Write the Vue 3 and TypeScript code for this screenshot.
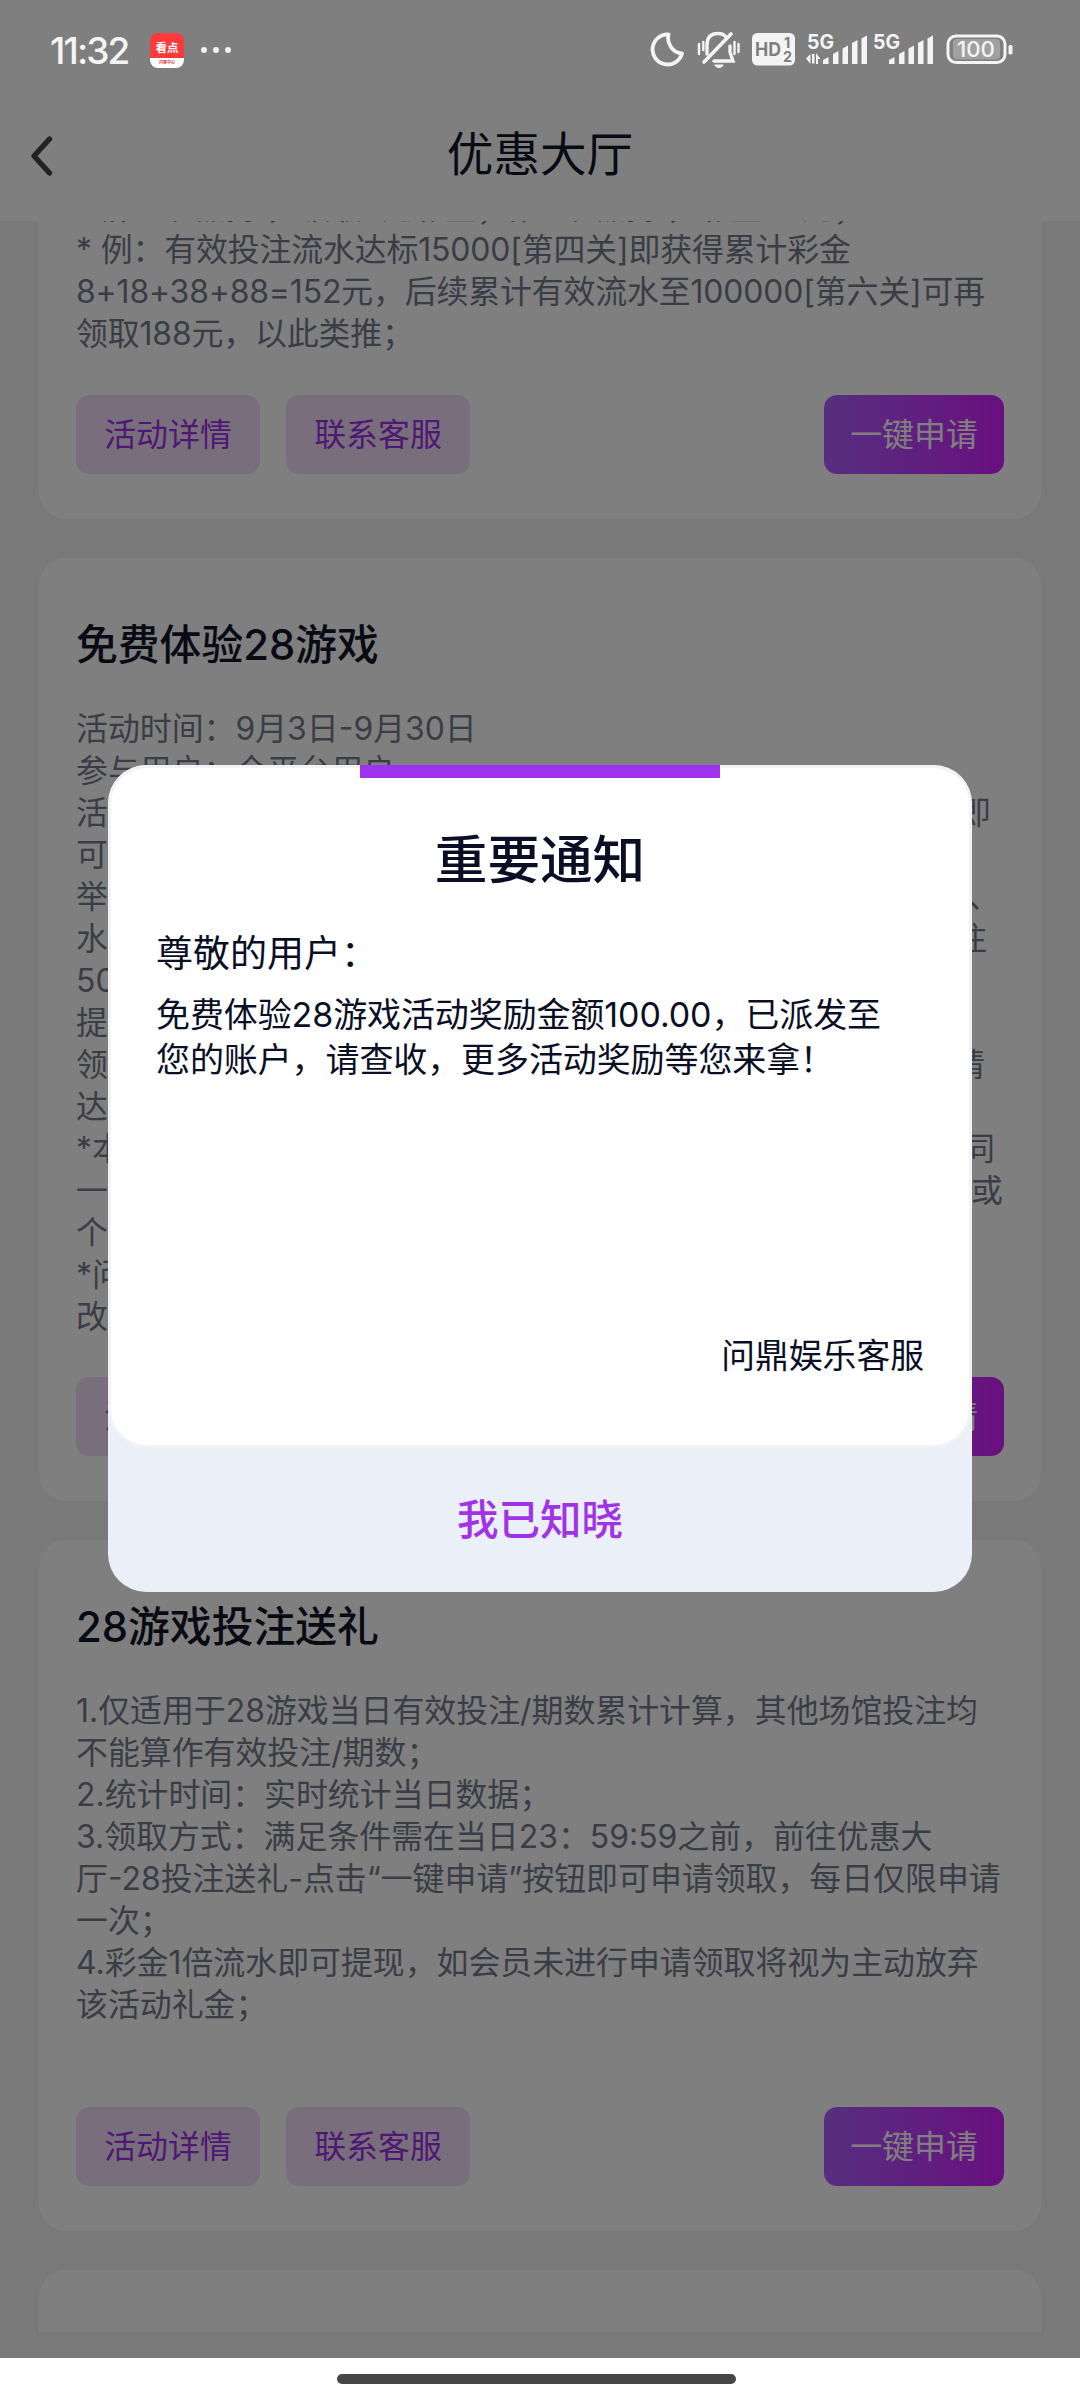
<script setup lang="ts">
interface SplitLine {
  start: string
  end?: string
  right?: number
}

const firstLines: string[] = [
  '（第一关流水，领取8元彩金；第二关流水，彩金38元；',
  '* 例：有效投注流水达标15000[第四关]即获得累计彩金',
  '8+18+38+88=152元，后续累计有效流水至100000[第六关]可再',
  '领取188元，以此类推；',
]

const trialLines: SplitLine[] = [
  { start: '活动时间：9月3日-9月30日' },
  { start: '参与用户：全平台用户' },
  { start: '活动', end: '即', right: 991 },
  { start: '可' },
  { start: '举', end: '、', right: 1000 },
  { start: '水', end: '注', right: 987 },
  { start: '50' },
  { start: '提' },
  { start: '领', end: '请', right: 985 },
  { start: '达' },
  { start: '*本', end: '同', right: 995 },
  { start: '一', end: '或', right: 1003 },
  { start: '个' },
  { start: '*问' },
  { start: '改' },
]

const giftLines: string[] = [
  '1.仅适用于28游戏当日有效投注/期数累计计算，其他场馆投注均',
  '不能算作有效投注/期数；',
  '2.统计时间：实时统计当日数据；',
  '3.领取方式：满足条件需在当日23：59:59之前，前往优惠大',
  '厅-28投注送礼-点击“一键申请”按钮即可申请领取，每日仅限申请',
  '一次；',
  '4.彩金1倍流水即可提现，如会员未进行申请领取将视为主动放弃',
  '该活动礼金；',
]

const bars = [
  { x: 0, y: 21.5, h: 7 },
  { x: 10, y: 15.5, h: 13 },
  { x: 19.5, y: 10, h: 18.5 },
  { x: 29, y: 4.5, h: 24 },
  { x: 38.5, y: 0, h: 28.5 },
]
</script>

<template>
  <div class="screen">
    <div class="page">
      <header class="nav">
        <svg class="back" width="30" height="44" viewBox="0 0 30 44">
          <path d="M20.500 5 L5 22 L20.500 39" fill="none" stroke="#46464c" stroke-width="5.4" stroke-linecap="round" stroke-linejoin="round" />
        </svg>
        <h1>优惠大厅</h1>
      </header>

      <main class="list">
        <section class="card first">
          <div class="body tight">
            <p v-for="line in firstLines" :key="line">{{ line }}</p>
          </div>
          <div class="actions">
            <button class="soft">活动详情</button>
            <button class="soft">联系客服</button>
            <button class="apply">一键申请</button>
          </div>
        </section>

        <section class="card second">
          <h2>免费体验28游戏</h2>
          <div class="body">
            <p v-for="line in trialLines" :key="line.start" class="split" :style="{ width: (line.right ?? 1003) - 76 + 'px' }">
              <span>{{ line.start }}</span><span v-if="line.end">{{ line.end }}</span>
            </p>
          </div>
          <div class="actions">
            <button class="soft">活动详情</button>
            <button class="soft">联系客服</button>
            <button class="apply">一键申请</button>
          </div>
        </section>

        <section class="card third">
          <h2>28游戏投注送礼</h2>
          <div class="body">
            <p v-for="line in giftLines" :key="line">{{ line }}</p>
          </div>
          <div class="actions">
            <button class="soft">活动详情</button>
            <button class="soft">联系客服</button>
            <button class="apply">一键申请</button>
          </div>
        </section>

        <section class="card last"></section>
      </main>
    </div>

    <footer class="gesture"><span></span></footer>

    <div class="mask">
      <div class="dialog">
        <div class="notice">
          <i class="accent"></i>
          <h3>重要通知</h3>
          <p class="hello">尊敬的用户：</p>
          <p class="msg">免费体验28游戏活动奖励金额100.00，已派发至</p>
          <p class="msg">您的账户，请查收，更多活动奖励等您来拿！</p>
          <p class="sign">问鼎娱乐客服</p>
        </div>
        <button class="confirm">我已知晓</button>
      </div>
    </div>

    <div class="status">
      <span class="time">11:32</span>
      <span class="app"><b>看点</b><small>内容中心</small></span>
      <span class="dots"><i></i><i></i><i></i></span>
      <svg class="sys" width="366" height="44" viewBox="0 0 366 44" fill="#f4f4f4">
        <path d="M18.500 6.500 A15 15 0 1 0 32 25.500 A15.500 15.500 0 0 1 18.500 6.500 Z" fill="none" stroke="#f4f4f4" stroke-width="3.8" stroke-linejoin="round" />
        <g fill="none" stroke="#f4f4f4" stroke-width="3.4" stroke-linecap="round">
          <path d="M57 26 V17 Q57 6 67 5.500 Q73 5 76 9" />
          <path d="M80 18 V24 L83 33 H64" />
          <path d="M54 34 L81 6" stroke-width="3.600" />
          <path d="M49 16 V26 M53.300 14 V22 M84.500 14 V26 M88.500 16 V24" stroke-width="2.400" />
        </g>
        <path d="M64 36.500 H74 Q72 40 69 40 Q66 40 64 36.500Z" />
        <rect x="102" y="5" width="43" height="32.500" rx="5.500" />
        <text x="105" y="28" font-size="18.500" font-weight="700" fill="#7f7f7f" textLength="26" lengthAdjust="spacingAndGlyphs">HD</text>
        <text x="134" y="20" font-size="14.500" font-weight="700" fill="#7f7f7f">1</text>
        <text x="133" y="34" font-size="14.500" font-weight="700" fill="#7f7f7f">2</text>
        <text x="157" y="20.500" font-size="19.500" font-weight="700" textLength="27" lengthAdjust="spacingAndGlyphs">5G</text>
        <text x="223" y="20.500" font-size="19.500" font-weight="700" textLength="27" lengthAdjust="spacingAndGlyphs">5G</text>
        <path d="M160.500 26 V36 L156 30.500 Z M162 26 V35.500 H164.500 V26 Z M166 36 V25 L170.500 31 L168 31 V36 Z" />
        <g v-for="ox in [173, 239]" :key="ox" :transform="`translate(${ox} 7.5)`">
          <path v-for="b in bars" :key="b.x" :d="`M${b.x} ${b.y + 3} L${b.x + 5.5} ${b.y} V${b.y + b.h} H${b.x} Z`" />
        </g>
        <rect x="298" y="8" width="57" height="26.500" rx="8" fill="none" stroke="#f4f4f4" stroke-width="3" />
        <rect x="303" y="11" width="47" height="20.500" rx="4" fill="#a0a0a0" />
        <text x="307" y="29" font-size="22" font-weight="500" textLength="38" lengthAdjust="spacingAndGlyphs">100</text>
        <rect x="358.500" y="17" width="4" height="9.500" rx="1.500" />
      </svg>
    </div>
  </div>
</template>

<style>
html,
body {
  margin: 0;
  background: #fff;
}
</style>

<style scoped>
.screen {
  position: relative;
  width: 1080px;
  height: 2400px;
  overflow: hidden;
  display: flex;
  flex-direction: column;
  background: #fff;
  font-family: Inter, "Noto Sans CJK SC", sans-serif;
}
h1, h2, h3, p {
  margin: 0;
  font-weight: 400;
  white-space: nowrap;
}
button {
  border: 0;
  padding: 0;
  font-family: inherit;
}
.page {
  height: 2358px;
  display: flex;
  flex-direction: column;
  background: #f3f3f3;
}
.nav {
  box-sizing: border-box;
  height: 221px;
  flex: none;
  padding: 90px 29px 0;
  display: grid;
  grid-template-columns: 30px 1fr 30px;
  align-items: center;
  background: #fff;
}
.nav h1 {
  margin-top: -3px;
  text-align: center;
  font-size: 46.6px;
  line-height: 64px;
  color: #101428;
}
.list {
  height: 2111px;
  flex: none;
  overflow: hidden;
  padding: 0 39px;
  display: flex;
  flex-direction: column;
  gap: 39px;
}
.card {
  box-sizing: border-box;
  flex: none;
  background: #fff;
  border-radius: 27px;
  padding: 0 37px 45px;
  display: flex;
  flex-direction: column;
}
.first {
  height: 298px;
  border-radius: 0 0 27px 27px;
  justify-content: flex-end;
}
.first .body {
  margin-bottom: 40px;
}
.tight {
  letter-spacing: -0.14px;
}
.second {
  height: 943px;
}
.third {
  height: 691px;
}
.last {
  height: 300px;
}
.card h2 {
  margin-top: 57px;
  height: 60px;
  line-height: 60px;
  font-size: 41.8px;
  font-weight: 500;
  color: #101428;
}
.card h2 + .body {
  margin-top: 33px;
}
.body p {
  height: 42px;
  line-height: 42px;
  font-size: 31.9px;
  color: #737a8c;
}
.split {
  display: flex;
  justify-content: space-between;
}
.actions {
  margin-top: auto;
  height: 79px;
  display: flex;
  gap: 26px;
}
.first .actions {
  margin-top: 0;
}
.actions button {
  width: 184px;
  height: 79px;
  border-radius: 13px;
  font-size: 31.9px;
  line-height: 79px;
}
.actions .soft {
  background: #f3dff8;
  color: #9c30e8;
}
.actions .apply {
  width: 180px;
  margin-left: auto;
  background: linear-gradient(90deg, #ac5eff, #d420ff);
  color: #fff;
}
.gesture {
  height: 42px;
  display: flex;
  justify-content: center;
  background: #fff;
}
.gesture span {
  width: 399px;
  height: 10px;
  margin: 16px 7px 0 0;
  border-radius: 5px;
  background: #464646;
}
.mask {
  position: absolute;
  top: 0;
  left: 0;
  width: 1080px;
  height: 2358px;
  background: rgba(0, 0, 0, 0.5);
  display: flex;
  justify-content: center;
  align-items: flex-start;
}
.dialog {
  margin-top: 765px;
  width: 864px;
  height: 827px;
  border-radius: 38px;
  overflow: hidden;
  background: #eaeff8;
  display: flex;
  flex-direction: column;
}
.notice {
  box-sizing: border-box;
  height: 683px;
  border: 3px solid #f2f3f5;
  border-radius: 39px;
  background: #fff;
  padding: 0 45px;
  display: flex;
  flex-direction: column;
  color: #0a0f26;
}
.accent {
  align-self: center;
  flex: none;
  width: 360px;
  height: 13px;
  margin-top: -3px;
  background: #a033f0;
}
.notice h3 {
  margin-top: 46px;
  height: 72px;
  line-height: 72px;
  font-size: 52.6px;
  font-weight: 500;
  text-align: center;
}
.hello {
  margin-top: 33px;
  height: 50px;
  line-height: 50px;
  font-size: 37px;
}
.hello + .msg {
  margin-top: 13px;
}
.msg {
  height: 45px;
  line-height: 45px;
  font-size: 34px;
  letter-spacing: -0.1px;
}
.sign {
  margin: 249px 0 0;
  height: 50px;
  line-height: 50px;
  font-size: 33.8px;
  text-align: right;
}
.confirm {
  flex: 1;
  padding-bottom: 6px;
  background: none;
  color: #a033e6;
  font-size: 41.5px;
  font-weight: 500;
}
.status {
  position: absolute;
  top: 0;
  left: 0;
  width: 1080px;
  height: 100px;
  display: flex;
  align-items: center;
  color: #f4f4f4;
}
.time {
  width: 100px;
  margin-left: 50px;
  font-size: 37px;
  font-weight: 500;
  letter-spacing: -1.9px;
  white-space: nowrap;
}
.app {
  width: 34px;
  height: 35px;
  border-radius: 8px;
  overflow: hidden;
  background: linear-gradient(#fb3a3c 0 25px, #fff 25px);
  display: flex;
  flex-direction: column;
  align-items: center;
  white-space: nowrap;
}
.app b {
  height: 25px;
  line-height: 31px;
  font-size: 11.5px;
  color: #fff;
}
.app small {
  line-height: 9px;
  font-size: 4px;
  font-weight: 700;
  color: #d8383a;
}
.dots {
  display: flex;
  gap: 6px;
  margin-left: 17px;
}
.dots i {
  width: 6px;
  height: 6px;
  border-radius: 50%;
  background: #f4f4f4;
}
.sys {
  margin: 0 64px 0 auto;
}
</style>
